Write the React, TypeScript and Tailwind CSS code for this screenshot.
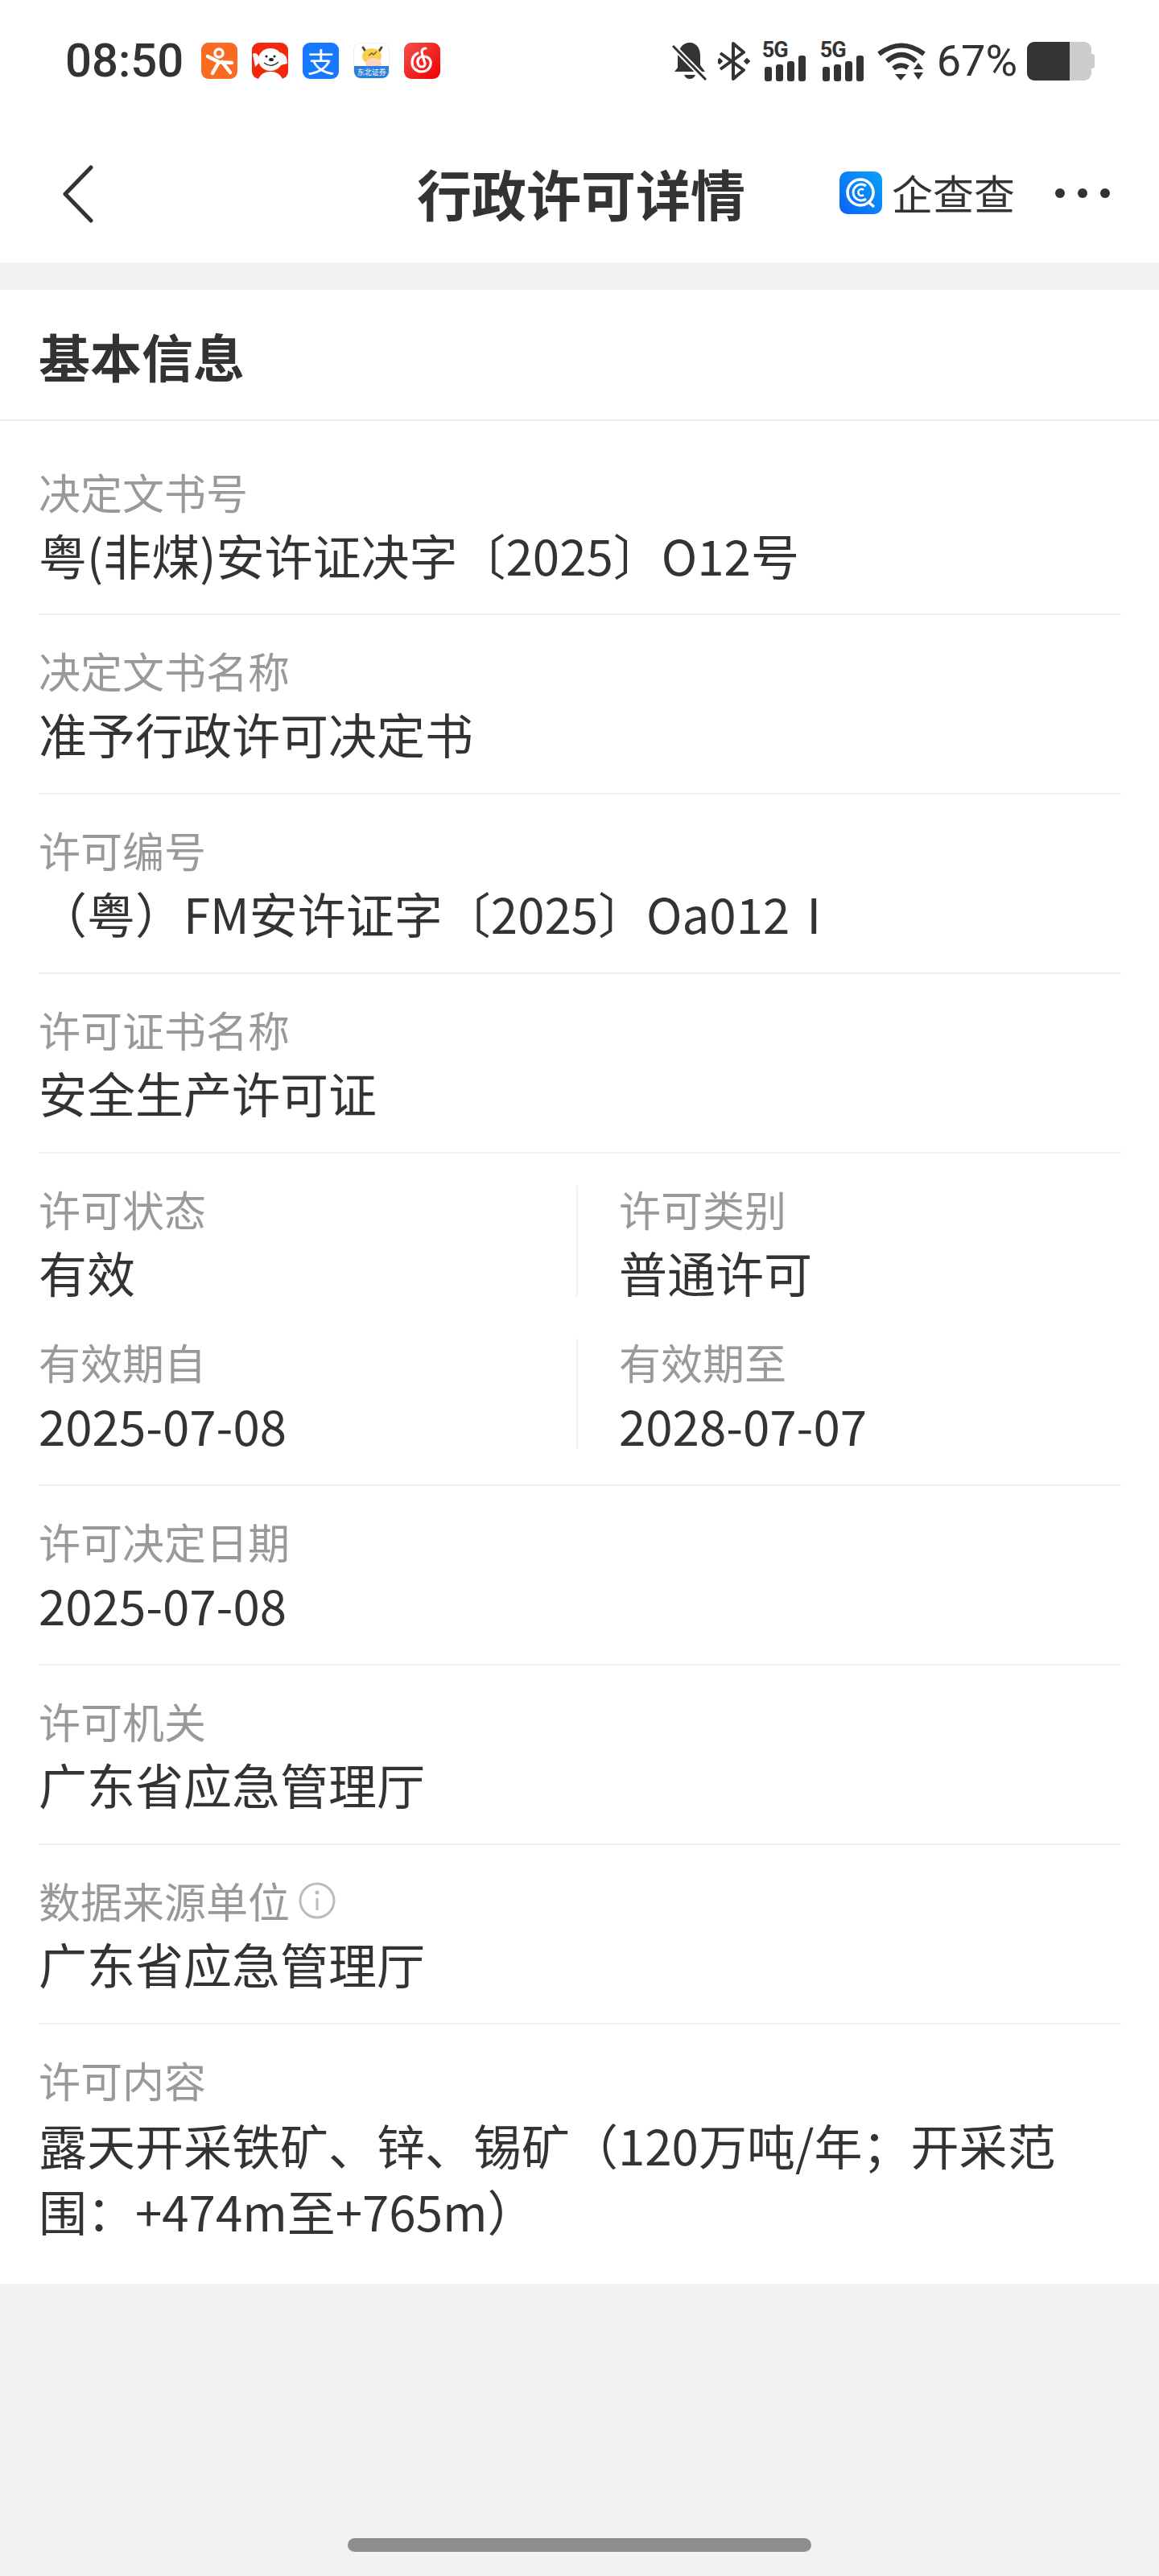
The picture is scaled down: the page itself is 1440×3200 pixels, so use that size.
const cjk = "font-['Noto_Sans_CJK_SC','Noto_Sans',sans-serif]";

function Label({ children }: { children: React.ReactNode }) {
  return <div className="h-[78px] text-[52px] leading-[78px] text-[#999999] whitespace-nowrap">{children}</div>;
}

function Value({ children }: { children: React.ReactNode }) {
  return <div className="h-[78px] text-[60px] leading-[78px] text-[#333333] whitespace-nowrap">{children}</div>;
}

function Row({ label, value }: { label: React.ReactNode; value: string }) {
  return (
    <div className="pt-[30px] pb-[35px] border-b-2 border-[#f0f0f0]">
      <Label>{label}</Label>
      <Value>{value}</Value>
    </div>
  );
}

function Cell({ label, value }: { label: string; value: string }) {
  return (
    <div>
      <Label>{label}</Label>
      <Value>{value}</Value>
    </div>
  );
}

function CellRow({ children }: { children: React.ReactNode }) {
  return <div className="grid grid-cols-[668px_2px_1fr] gap-x-0 items-center">{children}</div>;
}

function AppIcons() {
  return (
    <div className="flex gap-[18px] ml-[22px]">
      <svg width="45" height="45" viewBox="0 0 45 45">
        <rect width="45" height="45" rx="9" fill="#fb6a21" />
        <circle cx="22" cy="13" r="5" fill="none" stroke="#fff" strokeWidth="3.5" />
        <path d="M8 17 L22 24 L38 25 M22 24 L14 38 M26 24 L36 37" fill="none" stroke="#fff" strokeWidth="4.5" strokeLinecap="round" />
      </svg>
      <svg width="45" height="45" viewBox="0 0 45 45">
        <rect width="45" height="45" rx="9" fill="#f2270c" />
        <ellipse cx="23" cy="21" rx="15" ry="14" fill="#fff" />
        <path d="M1 14 Q8 10 10 24 L4 30 Z M35 12 Q44 14 44 26 L36 28 Z" fill="#f7f7f7" />
        <circle cx="18" cy="17" r="1.6" fill="#222" />
        <circle cx="28" cy="17" r="1.6" fill="#222" />
        <ellipse cx="24" cy="21" rx="3" ry="2" fill="#222" />
        <path d="M15 25 Q24 32 33 24" fill="none" stroke="#222" strokeWidth="1.2" />
        <path d="M8 45 Q12 36 23 36 Q34 36 38 45 Z" fill="#fff" />
      </svg>
      <div className="w-[45px] h-[45px] rounded-[9px] bg-[#1677ff] flex items-center justify-center text-white text-[34px] leading-none">支</div>
      <div className="relative w-[45px] h-[45px] rounded-[9px] bg-white border border-[#eeeeee] overflow-hidden">
        <svg width="45" height="32" viewBox="0 0 45 32" className="block">
          <path d="M11 5 L15 11 M34 5 L30 11" stroke="#5a4632" strokeWidth="3" strokeLinecap="round" />
          <ellipse cx="22" cy="16" rx="12" ry="10" fill="#f8cf4e" />
          <ellipse cx="24" cy="25" rx="10" ry="7" fill="#fbd5bd" />
          <path d="M18 15 L22 12 L24 14 L28 10" fill="none" stroke="#7a5a30" strokeWidth="1.4" />
        </svg>
        <div className="absolute left-0 right-0 bottom-0 h-[15px] bg-[#2a7fdc] text-white text-[9px] leading-[15px] text-center whitespace-nowrap">东北证券</div>
      </div>
      <svg width="45" height="45" viewBox="0 0 45 45">
        <defs>
          <linearGradient id="ne" x1="0" y1="0" x2="1" y2="1">
            <stop offset="0" stopColor="#f4504a" />
            <stop offset="1" stopColor="#f00000" />
          </linearGradient>
        </defs>
        <rect width="45" height="45" rx="9" fill="url(#ne)" />
        <path d="M27 7 C22 7 21 11 23 16 L26 26 C27 31 18 32 17 25 C16 20 20 17 24 17 C31 17 34 22 33 27 C32 33 27 36 22 36 C15 36 10 31 10 25 C10 19 13 15 17 13" fill="none" stroke="#fff" strokeWidth="3.2" strokeLinecap="round" />
      </svg>
    </div>
  );
}

function Signal() {
  return (
    <div className="relative w-[57px] h-[49px]">
      <div className="absolute left-0 top-[-3px] text-[27px] leading-[26px] font-bold tracking-[-1px] text-[#333333] font-['Roboto',sans-serif]">5G</div>
      <svg width="57" height="49" viewBox="0 0 57 49" className="block">
        <rect x="3" y="31" width="9" height="18" rx="3" fill="#333" />
        <rect x="17" y="28" width="9" height="21" rx="3" fill="#333" />
        <rect x="31" y="24" width="9" height="25" rx="3" fill="#333" />
        <rect x="45" y="17" width="9" height="32" rx="3" fill="#333" />
      </svg>
    </div>
  );
}

function StatusBar() {
  return (
    <div className="h-[200px] flex items-start pt-[52px] pl-[81px] pr-[80px] justify-between">
      <div className="flex items-center h-[47px]">
        <span className="text-[58px] leading-[47px] font-medium text-[#333333] font-['Roboto',sans-serif]">08:50</span>
        <AppIcons />
      </div>
      <div className="flex items-center h-[48px]">
        <svg width="44" height="48" viewBox="0 0 44 48">
          <path d="M22 1 C31 1 35 9 35 17 L35 29 L41 37 L3 37 L7 32 L7 20 C7 9 13 1 22 1 Z M15 41 L29 41 Q27 46 22 46 Q17 46 15 41 Z" fill="#333" />
          <path d="M0 4 L42 47" stroke="#fff" strokeWidth="7" />
          <path d="M1 5 L42 47" stroke="#333" strokeWidth="3" />
        </svg>
        <svg width="40" height="48" viewBox="0 0 40 48" className="ml-[13px]">
          <path d="M3 14 L32 35 L19 46 L19 2 L32 13 L3 34" fill="none" stroke="#333" strokeWidth="4" strokeLinejoin="round" />
          <rect x="-1" y="21" width="6" height="6" transform="rotate(45 2 24)" fill="#333" />
          <rect x="33" y="21" width="6" height="6" transform="rotate(45 36 24)" fill="#333" />
        </svg>
        <div className="ml-[15px]"><Signal /></div>
        <div className="ml-[15px]"><Signal /></div>
        <svg width="60" height="48" viewBox="0 0 60 48" className="ml-[14px]">
          <path d="M2 15 Q30 -6 58 15" fill="none" stroke="#333" strokeWidth="6" />
          <path d="M12 24 Q30 8 48 24" fill="none" stroke="#333" strokeWidth="6" />
          <path d="M20 33 Q29 26 38 32" fill="none" stroke="#333" strokeWidth="6" />
          <path d="M22 40 L36 40 L29 48 Z M45 34 L57 34 L51 26 Z M45 38 L57 38 L51 47 Z" fill="#333" />
        </svg>
        <span className="ml-[14px] text-[54px] leading-[48px] text-[#333333] font-['Roboto',sans-serif]">67%</span>
        <div className="ml-[12px] flex w-[80px] h-[48px] rounded-[9px] overflow-hidden bg-[#cccccc]">
          <div className="w-[53px] h-full bg-[#333333]" />
        </div>
        <div className="w-[4px] h-[18px] bg-[#cccccc] rounded-r-[3px]" />
      </div>
    </div>
  );
}

function Header() {
  return (
    <div className="h-[126px] flex items-start bg-white">
      <svg width="40" height="72" viewBox="0 0 40 72" className="ml-[77px] mt-[5px]">
        <path d="M36 3 L4 36 L36 69" fill="none" stroke="#333" strokeWidth="5" strokeLinecap="round" strokeLinejoin="round" />
      </svg>
      <div className="ml-[401px] text-[68px] leading-[80px] font-bold text-[#333333] whitespace-nowrap">行政许可详情</div>
      <svg width="53" height="53" viewBox="0 0 53 53" className="ml-[117px] mt-[13px]">
        <defs>
          <linearGradient id="qcc" x1="0" y1="1" x2="1" y2="0">
            <stop offset="0" stopColor="#0a62f5" />
            <stop offset="1" stopColor="#0aa2fa" />
          </linearGradient>
        </defs>
        <rect width="53" height="53" rx="10" fill="url(#qcc)" />
        <circle cx="26" cy="26" r="16" fill="none" stroke="#fff" strokeWidth="3.5" />
        <path d="M33 18 A10 10 0 1 0 33 34" fill="none" stroke="#fff" strokeWidth="3" />
        <path d="M30 23 A4 4 0 1 0 30 29" fill="none" stroke="#fff" strokeWidth="2.5" />
        <path d="M36 38 L43 44" stroke="#fff" strokeWidth="3.5" />
      </svg>
      <div className="ml-[12px] mt-[7px] w-[153px] text-[51px] leading-[64px] text-[#333333] whitespace-nowrap">企查查</div>
      <div className="ml-[50px] mt-[34px] flex gap-[16px]">
        <div className="w-[12px] h-[12px] rounded-full bg-[#333333]" />
        <div className="w-[12px] h-[12px] rounded-full bg-[#333333]" />
        <div className="w-[12px] h-[12px] rounded-full bg-[#333333]" />
      </div>
    </div>
  );
}

export default function App() {
  return (
    <div className={`h-[3200px] flex flex-col bg-[#f2f2f2] ${cjk}`}>
      <div className="bg-white">
        <StatusBar />
        <Header />
      </div>

      <div className="mt-[34px] bg-white">
        <div className="h-[163px] pl-[48px] border-b-2 border-[#eeeeee] text-[64px] leading-[162px] font-bold text-[#333333]">基本信息</div>

        <div className="pl-[48px] pr-[47px]">
          <div className="pt-[49px] pb-[34px] border-b-2 border-[#f0f0f0]">
            <Label>决定文书号</Label>
            <Value>粤(非煤)安许证决字〔2025〕O12号</Value>
          </div>
          <Row label="决定文书名称" value="准予行政许可决定书" />
          <Row label="许可编号" value="（粤）FM安许证字〔2025〕Oa012Ⅰ" />
          <Row label="许可证书名称" value="安全生产许可证" />

          <div className="pt-[30px] pb-[35px] border-b-2 border-[#f0f0f0]">
            <CellRow>
              <Cell label="许可状态" value="有效" />
              <div className="h-[137px] bg-[#f0f0f0]" />
              <div className="pl-[51px]"><Cell label="许可类别" value="普通许可" /></div>
            </CellRow>
            <div className="mt-[34px]">
              <CellRow>
                <Cell label="有效期自" value="2025-07-08" />
                <div className="h-[137px] bg-[#f0f0f0]" />
                <div className="pl-[51px]"><Cell label="有效期至" value="2028-07-07" /></div>
              </CellRow>
            </div>
          </div>

          <Row label="许可决定日期" value="2025-07-08" />
          <Row label="许可机关" value="广东省应急管理厅" />
          <Row
            label={
              <span className="flex items-center">
                数据来源单位
                <svg width="46" height="46" viewBox="0 0 46 46" className="ml-[11px]">
                  <circle cx="23" cy="23" r="21" fill="none" stroke="#bbbbbb" strokeWidth="3" />
                  <circle cx="23" cy="13" r="2.5" fill="#bbbbbb" />
                  <path d="M23 20 L23 35" stroke="#bbbbbb" strokeWidth="3" />
                </svg>
              </span>
            }
            value="广东省应急管理厅"
          />

          <div className="pt-[30px] pb-[50px]">
            <Label>许可内容</Label>
            <div className="text-[60px] leading-[82px] text-[#333333]">
              露天开采铁矿、锌、锡矿（120万吨/年；开采范围：+474m至+765m）
            </div>
          </div>
        </div>
      </div>

      <div className="mt-auto mb-[30px] mx-auto w-[576px] h-[17px] rounded-full bg-[#8e8e8e]" />
    </div>
  );
}
